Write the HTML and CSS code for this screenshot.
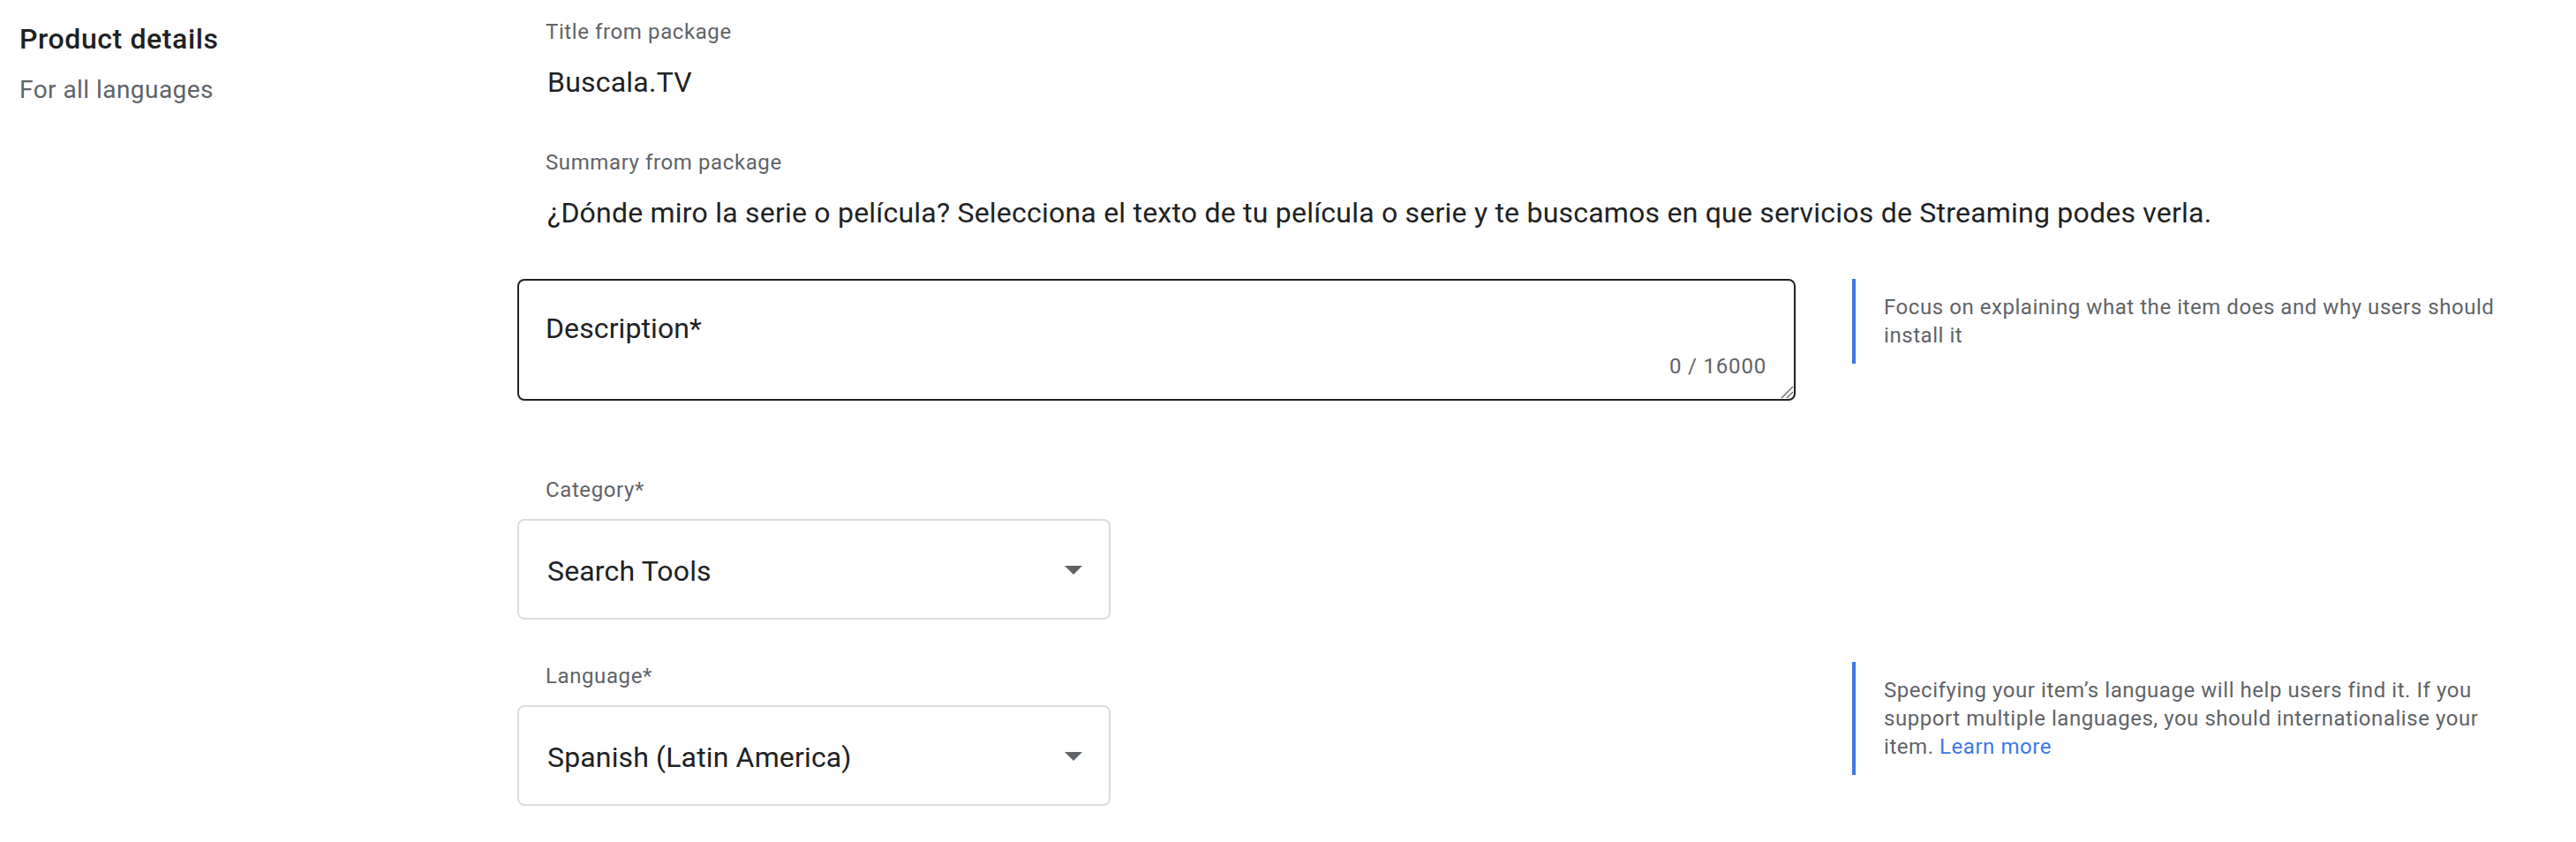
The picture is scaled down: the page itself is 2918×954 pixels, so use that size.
FILE: index.html
```html
<!DOCTYPE html>
<html lang="en">
<head>
<meta charset="utf-8">
<title>Product details</title>
<link rel="stylesheet" href="styles.css">
</head>
<body>
<div class="page">
  <aside class="side">
    <h2 class="side-title">Product details</h2>
    <p class="side-sub">For all languages</p>
  </aside>
  <main class="form">
    <div class="field">
      <div class="label">Title from package</div>
      <div class="value">Buscala.TV</div>
    </div>
    <div class="field">
      <div class="label">Summary from package</div>
      <div class="value">¿Dónde miro la serie o película? Selecciona el texto de tu película o serie y te buscamos en que servicios de Streaming podes verla.</div>
    </div>
    <div class="row row-desc">
      <div class="col-main">
        <div class="textarea">
          <div class="ta-placeholder">Description*</div>
          <div class="ta-counter">0 / 16000</div>
          <svg class="ta-grip" viewBox="0 0 16 16" width="16" height="16" aria-hidden="true">
            <line x1="2" y1="15" x2="15" y2="2"></line>
            <line x1="8" y1="15" x2="15" y2="8"></line>
          </svg>
        </div>
      </div>
      <div class="hint">Focus on explaining what the item does and why users should install it</div>
    </div>
    <div class="row row-category">
      <div class="col-main">
        <div class="label">Category*</div>
        <div class="select">
          <span class="select-text">Search Tools</span>
          <svg class="select-arrow" viewBox="0 0 24 24" width="48" height="48" aria-hidden="true"><path d="M7 10l5 5 5-5z"></path></svg>
        </div>
      </div>
    </div>
    <div class="row row-language">
      <div class="col-main">
        <div class="label">Language*</div>
        <div class="select">
          <span class="select-text">Spanish (Latin America)</span>
          <svg class="select-arrow" viewBox="0 0 24 24" width="48" height="48" aria-hidden="true"><path d="M7 10l5 5 5-5z"></path></svg>
        </div>
      </div>
      <div class="hint">Specifying your item’s language will help users find it. If you support multiple languages, you should internationalise your item. <a class="link" href="#">Learn more</a></div>
    </div>
  </main>
</div>
</body>
</html>
```
FILE: styles.css
```css
* {
  box-sizing: border-box;
}

body {
  margin: 0;
  background: #ffffff;
  color: #202124;
  font-family: Roboto, "Noto Sans", "Liberation Sans", sans-serif;
}

.page {
  display: grid;
  grid-template-columns: 586px 1fr;
  padding-top: 20px;
}

.side {
  padding-left: 22px;
}

.side-title {
  margin: 0;
  font-size: 32px;
  line-height: 48px;
  font-weight: 500;
  letter-spacing: 0.6px;
  color: #202124;
}

.side-sub {
  margin: 14px 0 0;
  font-size: 28px;
  line-height: 40px;
  letter-spacing: 0.45px;
  color: #5f6368;
}

.label {
  padding-left: 32px;
  font-size: 24px;
  line-height: 32px;
  letter-spacing: 0.6px;
  color: #5f6368;
}

.value {
  margin-top: 17px;
  padding-left: 34px;
  font-size: 32px;
  line-height: 48px;
  letter-spacing: 0.22px;
  color: #202124;
}

.field + .field {
  margin-top: 51px;
}

.row {
  display: grid;
  grid-template-columns: 1448px 756px;
  column-gap: 64px;
  align-items: start;
}

.row-desc {
  margin-top: 51px;
}

.row-category {
  margin-top: 85px;
}

.row-language {
  margin-top: 48px;
}

.textarea {
  position: relative;
  border: 2px solid #202124;
  border-radius: 8px;
  padding: 30px 31px 21px 30px;
}

.ta-placeholder {
  font-size: 32px;
  line-height: 48px;
  letter-spacing: 0.1px;
  color: #202124;
}

.ta-counter {
  margin-top: 3px;
  font-size: 24px;
  line-height: 32px;
  letter-spacing: 0.8px;
  color: #5f6368;
  text-align: right;
}

.ta-grip {
  position: absolute;
  right: 0;
  bottom: 0;
  stroke: #5f6368;
  stroke-width: 1.2;
}

.select {
  margin-top: 17px;
  width: 672px;
  height: 114px;
  border: 2px solid #dadce0;
  border-radius: 8px;
  display: flex;
  align-items: center;
  justify-content: space-between;
  padding: 0 16px 0 32px;
}

.select-text {
  padding-top: 4px;
  font-size: 32px;
  line-height: 48px;
  letter-spacing: 0.15px;
  color: #202124;
}

.select-arrow {
  fill: #5f6368;
  flex: none;
}

.hint {
  border-left: 4px solid #3b78e7;
  padding: 16px 0 16px 32px;
  font-size: 24px;
  line-height: 32px;
  letter-spacing: 0.55px;
  color: #5f6368;
}

.link {
  color: #3b78e7;
  text-decoration: none;
}
```
